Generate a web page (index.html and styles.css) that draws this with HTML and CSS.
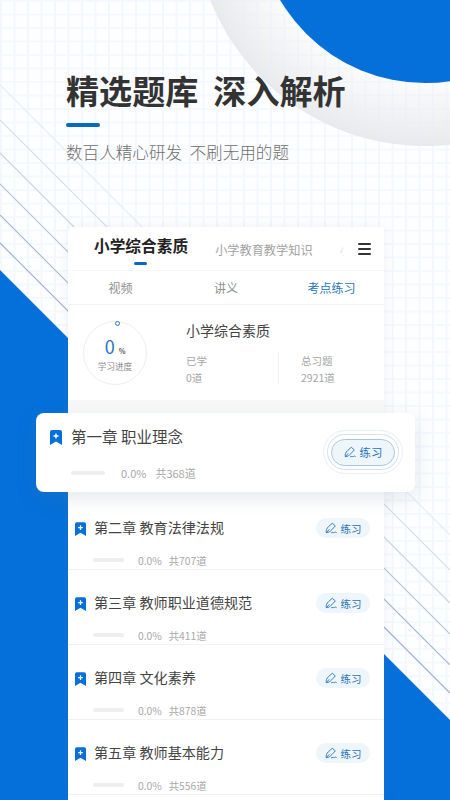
FILE: index.html
```html
<!DOCTYPE html>
<html lang="zh-CN">
<head>
    <meta charset="UTF-8">
    <meta name="viewport" content="width=device-width, initial-scale=1.0">
    <title>精选题库 深入解析</title>
    <link rel="stylesheet" href="styles.css">
</head>
<body>
    <!-- Background art: grid, circles, diagonal lines -->
    <svg class="backdrop" width="450" height="800" viewBox="0 0 450 800">
        <defs>
            <pattern id="grid" width="13.5" height="13.5" patternUnits="userSpaceOnUse">
                <path d="M0 1H13.5M1 0V13.5" stroke="#e8eef8" stroke-opacity="0.45" stroke-width="1.6" fill="none"/>
            </pattern>
            <radialGradient id="halo" gradientUnits="userSpaceOnUse" cx="425" cy="-85" r="231">
                <stop offset="0.72" stop-color="#fcfcfd"/>
                <stop offset="0.97" stop-color="#ebecee"/>
                <stop offset="1" stop-color="#e8e9eb"/>
            </radialGradient>
        </defs>
        <rect width="450" height="800" fill="#fdfeff"/>
        <circle cx="425" cy="-85" r="231" fill="url(#halo)"/>
        <rect width="450" height="800" fill="url(#grid)"/>
        <circle cx="425" cy="-85" r="168" fill="#0570da"/>
        <g fill="none" stroke-width="1.1">
            <path d="M0 85L450 535" stroke="#e6ecf4"/>
            <path d="M0 120L450 570" stroke="#d3dfec"/>
            <path d="M0 153L450 603" stroke="#c2d2e4"/>
            <path d="M0 184L450 634" stroke="#b0c5dc"/>
            <path d="M0 215L450 665" stroke="#a0b8d4"/>
            <path d="M0 243L450 693" stroke="#94aecd"/>
        </g>
        <polygon points="0,270 450,720 450,800 0,800" fill="#0570da"/>
    </svg>

    <svg width="0" height="0" class="defs">
        <symbol id="mark" viewBox="0 0 12 15">
            <path d="M2 0H10A2 2 0 0 1 12 2V15L6 11.5L0 15V2A2 2 0 0 1 2 0Z" fill="#0570da"/>
            <path d="M6 3.5V8.5M3.5 6H8.5" stroke="#fff" stroke-width="1.4" fill="none"/>
        </symbol>
        <symbol id="pen" viewBox="0 0 14 14">
            <path d="M1.5 12.5C1 9.5 2 7.5 4 5.5L8.5 1.5L12 4.5L8 9C6 11 4 12.5 1.5 12.5Z M1.5 12.5L5 8.5" fill="none" stroke="#2f7cbd" stroke-width="1.1" stroke-linejoin="round"/>
            <path d="M7.5 12.5C9 11.5 10 12.8 11 12.2C12 11.6 12.5 11.7 13.2 12.2" fill="none" stroke="#2f7cbd" stroke-width="1.1" stroke-linecap="round"/>
        </symbol>
    </svg>

    <div class="page">
        <header class="intro">
            <h1 class="headline">精选题库  深入解析</h1>
            <div class="headline-bar"></div>
            <p class="tagline">数百人精心研发  不刷无用的题</p>
        </header>

        <main class="card">
            <div class="tabs">
                <div class="tab-active">小学综合素质</div>
                <div class="tab">小学教育教学知识</div>
                <div class="tab tab-cut">小</div>
                <div class="menu"><span></span><span></span><span></span></div>
            </div>

            <div class="subtabs">
                <div>视频</div>
                <div>讲义</div>
                <div class="subtab-on">考点练习</div>
            </div>

            <section class="summary">
                <div class="ring">
                    <i class="ring-dot"></i>
                    <div class="ring-num">0<small>%</small></div>
                    <div class="ring-label">学习进度</div>
                </div>
                <div class="summary-info">
                    <div class="summary-title">小学综合素质</div>
                    <div class="stats">
                        <div class="stat">
                            <div>已学</div>
                            <div>0道</div>
                        </div>
                        <div class="stat stat-total">
                            <div>总习题</div>
                            <div>2921道</div>
                        </div>
                    </div>
                </div>
            </section>

            <div class="spacer"></div>

            <!-- Raised chapter card hangs over both sides of the list -->
            <div class="chapter chapter-raised">
                <div class="chapter-text">
                    <div class="chapter-title"><svg class="mark"><use href="#mark"/></svg>第一章 职业理念</div>
                    <div class="chapter-meta"><span class="meter"></span><span class="pct">0.0%</span><span>共368道</span></div>
                </div>
                <div class="ripple">
                    <button class="practice"><svg class="pen"><use href="#pen"/></svg>练习</button>
                </div>
            </div>

            <div class="chapter">
                <div class="chapter-text">
                    <div class="chapter-title"><svg class="mark"><use href="#mark"/></svg>第二章 教育法律法规</div>
                    <div class="chapter-meta"><span class="meter"></span><span class="pct">0.0%</span><span>共707道</span></div>
                </div>
                <button class="practice"><svg class="pen"><use href="#pen"/></svg>练习</button>
            </div>

            <div class="chapter">
                <div class="chapter-text">
                    <div class="chapter-title"><svg class="mark"><use href="#mark"/></svg>第三章 教师职业道德规范</div>
                    <div class="chapter-meta"><span class="meter"></span><span class="pct">0.0%</span><span>共411道</span></div>
                </div>
                <button class="practice"><svg class="pen"><use href="#pen"/></svg>练习</button>
            </div>

            <div class="chapter">
                <div class="chapter-text">
                    <div class="chapter-title"><svg class="mark"><use href="#mark"/></svg>第四章 文化素养</div>
                    <div class="chapter-meta"><span class="meter"></span><span class="pct">0.0%</span><span>共878道</span></div>
                </div>
                <button class="practice"><svg class="pen"><use href="#pen"/></svg>练习</button>
            </div>

            <div class="chapter">
                <div class="chapter-text">
                    <div class="chapter-title"><svg class="mark"><use href="#mark"/></svg>第五章 教师基本能力</div>
                    <div class="chapter-meta"><span class="meter"></span><span class="pct">0.0%</span><span>共556道</span></div>
                </div>
                <button class="practice"><svg class="pen"><use href="#pen"/></svg>练习</button>
            </div>
        </main>
    </div>
</body>
</html>
```
FILE: styles.css
```css
/* Page */
html, body {
    margin: 0;
    height: 100%;
}

body {
    position: relative;
    width: 450px;
    height: 800px;
    overflow: hidden;
    font-family: "Noto Sans CJK SC", "Noto Sans", sans-serif;
    color: #333;
}

.backdrop {
    position: absolute;
    top: 0;
    left: 0;
}

.defs {
    position: absolute;
}

.page {
    position: relative;
    height: 800px;
    overflow: hidden;
}

/* Intro */
.intro {
    padding: 65px 0 0 66px;
    height: 227px;
    box-sizing: border-box;
}

.headline {
    margin: 0;
    font-size: 33.1px;
    line-height: 50px;
    font-weight: 700;
    color: #333;
    white-space: pre;
}

.headline-bar {
    width: 34px;
    height: 4px;
    margin-top: 8px;
    border-radius: 2px;
    background-color: #0a68c4;
}

.tagline {
    margin: 12px 0 0;
    font-size: 16.6px;
    line-height: 26px;
    font-weight: 300;
    color: #6f6f6f;
    white-space: pre;
}

/* Card */
.card {
    margin: 0 66px 0 68px;
    height: 573px;
    background-color: #fff;
    border-radius: 6px 6px 0 0;
    box-shadow: 0 0 12px rgba(120, 140, 170, 0.12);
}

.tabs {
    position: relative;
    display: flex;
    height: 44px;
    overflow: hidden;
    border-bottom: 1px solid #f7f7f7;
    box-sizing: border-box;
}

.tab-active {
    position: relative;
    margin: 9px 0 0 26px;
    font-size: 15.7px;
    line-height: 20px;
    font-weight: 700;
    color: #222;
}

.tab-active::after {
    content: "";
    position: absolute;
    left: 40px;
    top: 26px;
    width: 13px;
    height: 3px;
    border-radius: 2px;
    background-color: #0a68c4;
}

.tab {
    margin: 15px 0 0 27px;
    font-size: 12.2px;
    line-height: 16px;
    color: #a2a2a2;
    white-space: nowrap;
}

.menu {
    position: absolute;
    top: 0;
    right: 0;
    display: flex;
    flex-direction: column;
    gap: 3px;
    width: 44px;
    height: 43px;
    padding: 16px 13px 0 18px;
    box-sizing: border-box;
    background: linear-gradient(to right, rgba(255, 255, 255, 0.5), #fff 12%);
}

.menu span {
    display: block;
    height: 2px;
    background-color: #333;
    border-radius: 1px;
}

.subtabs {
    display: grid;
    grid-template-columns: 105px 106px 105px;
    height: 34px;
    padding-bottom: 1px;
    box-sizing: border-box;
    align-items: center;
    justify-items: center;
    border-bottom: 1px solid #f3f3f3;
    font-size: 12px;
    color: #8f8f8f;
}

.subtab-on {
    color: #2a76b5;
}

/* Progress summary */
.summary {
    display: flex;
    height: 95px;
    padding: 16px 0 0 15px;
    box-sizing: border-box;
}

.ring {
    position: relative;
    flex: none;
    width: 64px;
    height: 64px;
    border: 1px solid #eeeeee;
    border-radius: 50%;
    box-sizing: border-box;
    text-align: center;
}

.ring-dot {
    position: absolute;
    top: -1px;
    left: 31px;
    width: 5px;
    height: 5px;
    border: 1px solid #2a76b5;
    border-radius: 50%;
    background-color: #fff;
    box-sizing: border-box;
}

.ring-num {
    margin-top: 15px;
    font-size: 18px;
    line-height: 18px;
    color: #2a76b5;
}

.ring-num small {
    margin-left: 4px;
    font-size: 7px;
    color: #555;
    font-weight: 700;
}

.ring-label {
    font-size: 8.6px;
    line-height: 12px;
    color: #8c8c8c;
}

.summary-info {
    margin-left: 39px;
    flex: 1;
}

.summary-title {
    margin-top: -1px;
    font-size: 14px;
    line-height: 20px;
    color: #444;
}

.stats {
    display: flex;
    margin-top: 12px;
}

.stat {
    width: 92px;
    height: 32px;
    font-size: 10.5px;
    line-height: 17px;
    color: #a5a5a5;
}

.stat-total {
    padding-left: 22px;
    border-left: 1px solid #f0f0f0;
}

.spacer {
    height: 13px;
    background-color: #f8f8f8;
}

/* Chapters */
.chapter {
    display: flex;
    justify-content: space-between;
    height: 75px;
    padding: 22px 14px 0 7px;
    border-bottom: 1px solid #f2f2f2;
    box-sizing: border-box;
}

.chapter-title {
    display: flex;
    align-items: center;
    height: 20px;
    font-size: 14.1px;
    color: #444;
    white-space: nowrap;
}

.mark {
    width: 11px;
    height: 14px;
    margin: 4px 8px 0 0;
}

.chapter-meta {
    display: flex;
    align-items: center;
    height: 14px;
    margin-top: 16px;
    padding-left: 18px;
    font-size: 10.3px;
    color: #a8a8a8;
}

.meter {
    width: 31px;
    height: 4px;
    margin-right: 14px;
    border-radius: 2px;
    background-color: #eeeeee;
}

.pct {
    margin-right: 7px;
}

.practice {
    display: flex;
    align-items: center;
    justify-content: center;
    gap: 4px;
    width: 54px;
    height: 20px;
    margin-top: 1px;
    padding: 0;
    border: none;
    border-radius: 10px;
    background-color: #eef5fb;
    font-family: inherit;
    font-size: 10.5px;
    color: #2a76b5;
}

.pen {
    width: 12px;
    height: 12px;
}

/* Raised chapter */
.chapter-raised {
    position: relative;
    height: 79px;
    margin: 0 -31px 3px -32px;
    padding: 13px 12px 0 14px;
    border-bottom: none;
    border-radius: 8px;
    background-color: #fff;
    box-shadow: 0 6px 20px rgba(90, 110, 140, 0.16);
}

.chapter-raised .chapter-title {
    font-size: 15.5px;
}

.chapter-raised .mark {
    width: 12px;
    height: 15px;
    margin: 2px 9px 0 0;
}

.chapter-raised .chapter-meta {
    margin-top: 20px;
    padding-left: 21px;
    font-size: 11px;
}

.chapter-raised .meter {
    width: 34px;
    margin-right: 16px;
}

.chapter-raised .pct {
    margin-right: 9px;
}

.ripple {
    display: flex;
    align-items: center;
    justify-content: center;
    width: 80px;
    height: 44px;
    margin-top: 4px;
    border: 1px solid #eaf1f7;
    border-radius: 22px;
    box-sizing: border-box;
    box-shadow: inset 0 0 0 3px #fff, inset 0 0 0 4px #d6e3ee;
}

.chapter-raised .practice {
    width: 64px;
    height: 27px;
    margin-top: 0;
    border: 1px solid #a9c6dc;
    border-radius: 14px;
    font-size: 11.4px;
}
```
